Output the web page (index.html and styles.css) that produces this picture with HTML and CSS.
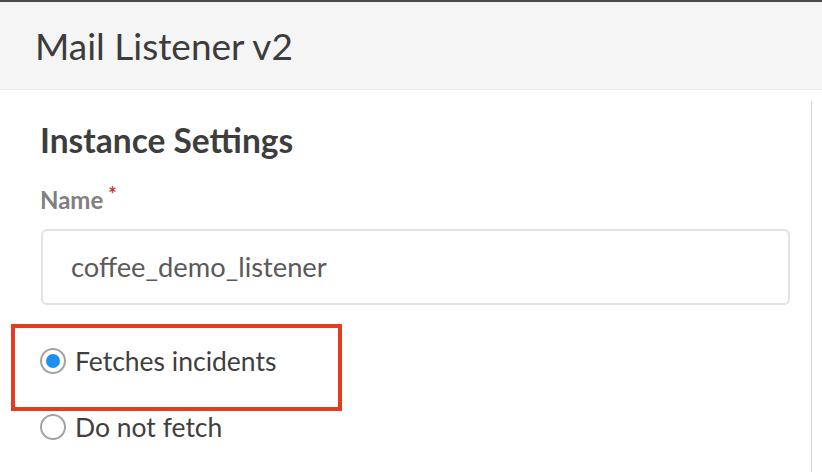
FILE: index.html
```html
<!DOCTYPE html>
<html lang="en">
<head>
  <meta charset="UTF-8">
  <meta name="viewport" content="width=device-width, initial-scale=1.0">
  <title>Mail Listener v2</title>
  <link rel="stylesheet" href="styles.css">
</head>
<body>
  <div class="modal">
    <header class="modal-header">
      <h1>Mail Listener v2</h1>
    </header>
    <div class="modal-body">
      <div class="content">
        <h2>Instance Settings</h2>

        <!-- Name field -->
        <label class="field-label" for="instanceName">Name<span class="required">*</span></label>
        <input type="text" id="instanceName" class="text-input" value="coffee_demo_listener">

        <!-- Fetch options -->
        <div class="highlight">
          <label class="option">
            <input type="radio" name="fetch" value="fetch" checked>
            <span>Fetches incidents</span>
          </label>
        </div>
        <label class="option option-second">
          <input type="radio" name="fetch" value="none">
          <span>Do not fetch</span>
        </label>
      </div>
      <div class="scroll-track"></div>
    </div>
  </div>
</body>
</html>
```

FILE: styles.css
```css
body {
  margin: 0;
  padding: 0;
  font-family: Lato, "Open Sans", Arial, sans-serif;
  background: #fff;
  overflow: hidden;
}

.modal {
  border-top: 2px solid #4a4a4a;
  height: 470px;
  display: flex;
  flex-direction: column;
}

.modal-header {
  height: 87px;
  background-color: #f5f5f5;
  border-bottom: 1px solid #ebebeb;
  display: flex;
  align-items: center;
  padding-left: 35px;
}

h1 {
  margin: 0;
  font-size: 37px;
  font-weight: 400;
  color: #3c3c3c;
  line-height: 44px;
}

.modal-body {
  flex: 1;
  display: flex;
}

.content {
  flex: 1;
  padding: 30px 21px 0 40px;
  display: flex;
  flex-direction: column;
  align-items: flex-start;
}

.scroll-track {
  width: 2px;
  background-color: #d9d9d9;
  margin: 11px 10px 0 0;
}

h2 {
  margin: 0;
  font-size: 33.5px;
  font-weight: 700;
  line-height: 40px;
  color: #3d3d3d;
}

.field-label {
  margin-top: 25px;
  font-size: 24px;
  line-height: 30px;
  font-weight: 700;
  color: #808080;
}

.required {
  color: #d0312d;
  font-size: 20px;
  vertical-align: top;
  position: relative;
  top: -6px;
  margin-left: 5px;
}

.text-input {
  box-sizing: border-box;
  width: 749px;
  height: 76px;
  margin: 14px 0 0 1px;
  padding: 0 0 2px 28px;
  border: 2px solid #e2e2e2;
  border-radius: 6px;
  font-family: inherit;
  font-size: 27.3px;
  color: #5a5a5a;
  outline: none;
}

/* red annotation box around the first option */
.highlight {
  margin: 19px 0 0 -29px;
  width: 298px;
  padding: 20px 0 33px 25px;
  border: 4px solid #e63b1f;
}

.option {
  display: flex;
  align-items: center;
  gap: 9px;
  font-size: 26.5px;
  line-height: 26px;
  color: #3f3f3f;
}

.option-second {
  margin-top: 3px;
}

.option input {
  appearance: none;
  -webkit-appearance: none;
  box-sizing: border-box;
  width: 26px;
  height: 26px;
  margin: 0;
  border: 2px solid #a3a3a3;
  border-radius: 50%;
  background: #fff;
  display: grid;
  place-items: center;
}

.option input:checked::before {
  content: "";
  width: 14px;
  height: 14px;
  border-radius: 50%;
  background-color: #1e8ff0;
}
```
